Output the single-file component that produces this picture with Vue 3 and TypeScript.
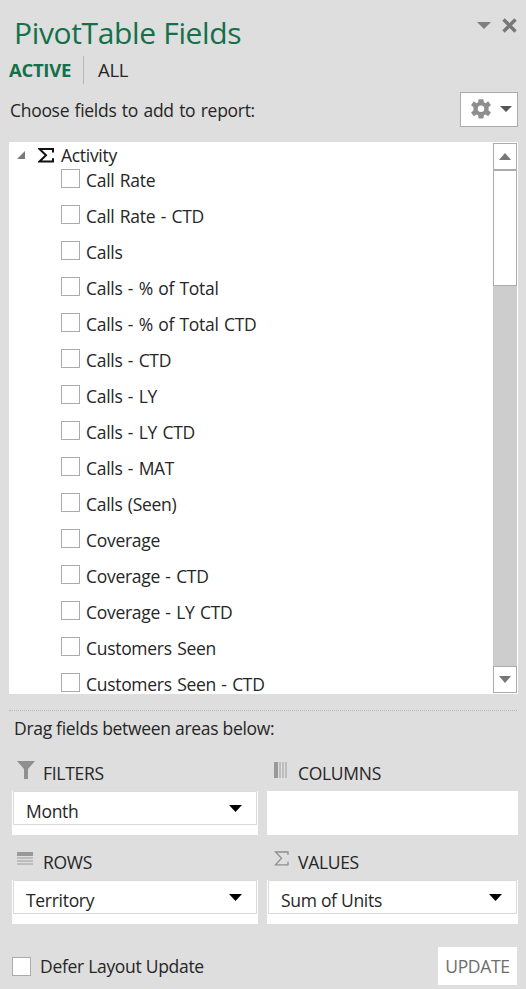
<script setup lang="ts">
type Area = {
  name: string
  icon: string
  value?: string
}

const fields: string[] = [
  'Call Rate',
  'Call Rate - CTD',
  'Calls',
  'Calls - % of Total',
  'Calls - % of Total CTD',
  'Calls - CTD',
  'Calls - LY',
  'Calls - LY CTD',
  'Calls - MAT',
  'Calls (Seen)',
  'Coverage',
  'Coverage - CTD',
  'Coverage - LY CTD',
  'Customers Seen',
  'Customers Seen - CTD',
]

const areas: Area[] = [
  { name: 'FILTERS', icon: 'filter', value: 'Month' },
  { name: 'COLUMNS', icon: 'columns' },
  { name: 'ROWS', icon: 'rows', value: 'Territory' },
  { name: 'VALUES', icon: 'sigma', value: 'Sum of Units' },
]
</script>

<template>
  <div class="panel">
    <header class="head">
      <h1 class="title">PivotTable Fields</h1>
      <div class="win-btns">
        <svg width="14" height="8" viewBox="0 0 14 8"><path d="M0 0h14L7 7z" fill="#7f7f7f" /></svg>
        <svg width="15" height="15" viewBox="0 0 15 15"><path d="M1.500 1.500l12 12M13.500 1.500l-12 12" stroke="#777" stroke-width="3.400" /></svg>
      </div>
    </header>

    <nav class="tabs">
      <span class="tab active">ACTIVE</span>
      <span class="tab all">ALL</span>
    </nav>

    <div class="choose">
      <span>Choose fields to add to report:</span>
      <button class="gear">
        <svg width="24" height="24" viewBox="0 0 20 20">
          <path fill-rule="evenodd" fill="#8e8e8e" d="M8 1h4l.4 2.600 1.500.7L16 2.700 18.300 6l-2 1.600v2.800l2 1.600L16 15.300l-2.100-1.600-1.500.7L12 17H8l-.4-2.600-1.500-.7L4 15.300 1.700 12l2-1.600V7.600L1.700 6 4 2.700l2.100 1.600 1.500-.7zM10 6.300a2.700 2.700 0 1 0 0 5.400 2.700 2.700 0 0 0 0-5.400z" />
        </svg>
        <svg width="12" height="7" viewBox="0 0 12 7"><path d="M0 0h12L6 6z" fill="#555" /></svg>
      </button>
    </div>

    <section class="list">
      <div class="tree">
        <div class="group">
          <svg class="caret" width="10" height="10" viewBox="0 0 10 10"><path d="M9 1v8H1z" fill="#7a7a7a" /></svg>
          <svg class="sigma" width="16" height="15" viewBox="0 0 16 15">
            <path d="M15 4.500V1H1.500L8 7.300 1.500 13.500H15v-3.200" fill="none" stroke="#111" stroke-width="2" />
          </svg>
          <span>Activity</span>
        </div>
        <label v-for="f in fields" :key="f" class="field">
          <span class="check" />
          <span>{{ f }}</span>
        </label>
      </div>
      <div class="scrollbar">
        <div class="sb-btn">
          <svg width="12" height="7" viewBox="0 0 12 7"><path d="M0 7h12L6 0z" fill="#777" /></svg>
        </div>
        <div class="sb-thumb" />
        <div class="sb-track" />
        <div class="sb-btn">
          <svg width="12" height="7" viewBox="0 0 12 7"><path d="M0 0h12L6 7z" fill="#777" /></svg>
        </div>
      </div>
    </section>

    <div class="drag-label">Drag fields between areas below:</div>

    <section class="areas">
      <div v-for="a in areas" :key="a.name" class="area">
        <div class="area-name">
          <span class="area-icon">
            <svg v-if="a.icon === 'filter'" width="18" height="18" viewBox="0 0 18 18">
              <path d="M0 0h18L11 8v10H7V8z" fill="#8f8f8f" />
            </svg>
            <svg v-else-if="a.icon === 'columns'" width="14" height="16" viewBox="0 0 14 16">
              <path d="M0 0h4v16H0z" fill="#999" />
              <path d="M5.500 0h1v16h-1zM8.500 0h1v16h-1zM11.500 0h1v16h-1z" fill="#9c9c9c" />
            </svg>
            <svg v-else-if="a.icon === 'rows'" width="16" height="14" viewBox="0 0 16 14">
              <path d="M0 0h16v4H0z" fill="#999" />
              <path d="M0 5.500h16v1H0zM0 8.500h16v1H0zM0 11.500h16v1H0z" fill="#9c9c9c" />
            </svg>
            <svg v-else width="15" height="15" viewBox="0 0 15 15">
              <path d="M14 4V1H1.500L7.500 7.300 1.500 13.800H14v-3" fill="none" stroke="#8f8f8f" stroke-width="1.300" />
            </svg>
          </span>
          <span>{{ a.name }}</span>
        </div>
        <div class="drop">
          <div v-if="a.value" class="pill">
            <span class="pill-text">{{ a.value }}</span>
            <svg width="13" height="7" viewBox="0 0 13 7"><path d="M0 0h13L6.500 7z" fill="#000" /></svg>
          </div>
        </div>
      </div>
    </section>

    <footer class="foot">
      <label class="defer">
        <span class="check defer-check" />
        <span>Defer Layout Update</span>
      </label>
      <button class="update">UPDATE</button>
    </footer>
  </div>
</template>

<style>
  html,
  body {
    margin: 0;
    background: #dedede;
  }
</style>

<style scoped>
  .panel {
    width: 526px;
    height: 989px;
    overflow: hidden;
    box-sizing: border-box;
    background: #dedede;
    color: #262626;
    font-family: "Open Sans", "Noto Sans", sans-serif;
    font-size: 17.500px;
    letter-spacing: -0.300px;
  }

  .head {
    display: flex;
    justify-content: space-between;
    height: 54px;
    padding: 13px 9px 0 14px;
    box-sizing: border-box;
  }

  .title {
    margin: 0;
    font-size: 30px;
    font-weight: 400;
    line-height: 40px;
    letter-spacing: -0.350px;
    color: #14704a;
  }

  .win-btns {
    display: flex;
    align-items: flex-start;
    gap: 11px;
    padding-top: 5px;
  }

  .win-btns svg:first-child {
    margin-top: 4px;
  }

  .tabs {
    display: flex;
    align-items: center;
    height: 30px;
    padding: 2px 0 0 9px;
    box-sizing: border-box;
    font-size: 18.500px;
  }

  .tab {
    line-height: 28px;
  }

  .active {
    font-weight: 700;
    color: #14704a;
    padding-right: 12px;
    border-right: 1px solid #b5b5b5;
  }

  .all {
    padding-left: 14px;
  }

  .choose {
    display: flex;
    justify-content: space-between;
    align-items: center;
    height: 35px;
    margin-top: 8px;
    padding: 0 8px 0 10px;
    word-spacing: 1.200px;
  }

  .gear {
    display: flex;
    align-items: center;
    justify-content: space-between;
    box-sizing: border-box;
    width: 58px;
    height: 35px;
    padding: 0 5px 0 8px;
    background: #fff;
    border: 1px solid #ababab;
  }

  .list {
    display: flex;
    justify-content: space-between;
    height: 552px;
    margin: 15px 8px 0 9px;
    background: #fff;
    overflow: hidden;
  }

  .tree {
    padding-top: 6px;
  }

  .group {
    display: flex;
    align-items: center;
    height: 14px;
    padding-left: 7px;
  }

  .caret {
    margin-right: 12px;
  }

  .sigma {
    flex: none;
    margin-right: 7px;
  }

  .field {
    display: flex;
    align-items: center;
    height: 36px;
    padding-left: 52px;
    word-spacing: 1.200px;
  }

  .check {
    flex: none;
    box-sizing: border-box;
    width: 19px;
    height: 19px;
    margin: -4px 6px 0 0;
    background: #fff;
    border: 1px solid #ababab;
  }

  .scrollbar {
    display: flex;
    flex-direction: column;
    flex: none;
    width: 25px;
    padding: 1px 1px 1px 0;
    box-sizing: border-box;
    background: #fff;
  }

  .sb-btn {
    display: flex;
    align-items: center;
    justify-content: center;
    height: 25px;
    background: #fff;
    border: 1px solid #ababab;
  }

  .sb-thumb {
    height: 114px;
    background: #fff;
    border: 1px solid #ababab;
  }

  .sb-track {
    flex: 1;
    background: #cdcdcd;
  }

  .drag-label {
    margin: 16px 9px 0;
    padding: 5px 5px 0;
    border-top: 1px dotted #b5b5b5;
    line-height: 24px;
  }

  .areas {
    display: grid;
    grid-template-columns: 246px 251px;
    column-gap: 9px;
    margin: 19px 8px 0 12px;
  }

  .area-name {
    display: flex;
    align-items: center;
    height: 27px;
    margin-bottom: 5px;
  }

  .area-icon {
    display: flex;
    align-items: center;
    flex: none;
    width: 26px;
    height: 18px;
    padding-left: 5px;
    margin-top: -6px;
  }

  .area:nth-child(even) .area-icon {
    width: 24px;
    padding-left: 7px;
  }

  .drop {
    height: 44px;
    margin-bottom: 13px;
    background: #fff;
  }

  .pill {
    display: flex;
    align-items: center;
    justify-content: space-between;
    box-sizing: border-box;
    height: 34px;
    margin: 2px 1px 0;
    padding: 0 14px 0 12px;
    border: 1px solid #dadada;
  }

  .pill-text {
    padding-top: 5px;
  }

  .foot {
    display: flex;
    align-items: center;
    justify-content: space-between;
    margin: 10px 9px 0 12px;
  }

  .defer {
    display: flex;
    align-items: center;
  }

  .defer-check {
    margin: 0 9px 0 0;
  }

  .update {
    width: 79px;
    height: 38px;
    padding: 0;
    font: inherit;
    letter-spacing: -0.300px;
    color: #6d6d6d;
    background: #fff;
    border: 0;
  }
</style>
